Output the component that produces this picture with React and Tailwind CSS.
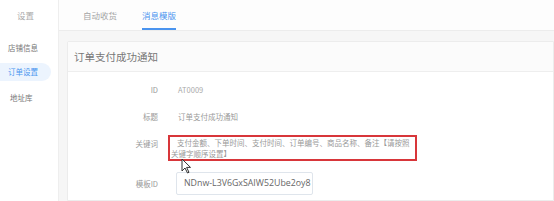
import React from "react";

const font = { fontFamily: '"Noto Sans CJK SC", "Noto Sans", sans-serif' };

export default function App() {
  return (
    <div
      className="relative flex w-[554px] h-[201px] overflow-hidden bg-white text-[#888]"
      style={font}
    >
      {/* Sidebar */}
      <div className="w-[59px] shrink-0 border-r border-[#eeeeee] bg-white flex flex-col">
        <div className="h-[31px] flex items-center pl-[17px] text-[8.5px] text-[#aaa]">设置</div>
        <div className="mt-[8px] h-[18px] flex items-center pl-[8px] text-[7.5px] text-[#777]">店铺信息</div>
        <div className="mt-[6px] h-[18px] w-[51px] flex items-center pl-[8px] text-[7.5px] text-[#4a94ef] bg-[#ecf4fe] rounded-r-full">
          订单设置
        </div>
        <div className="mt-[8px] h-[18px] flex items-center pl-[10px] text-[7.5px] text-[#777]">地址库</div>
      </div>

      {/* Main */}
      <div className="flex-1 flex flex-col min-w-0">
        <div className="h-[31px] shrink-0 bg-[#fdfdfd] border-b border-[#ececec] flex items-stretch pl-[24px] gap-[25px] text-[8.5px]">
          <div className="flex items-center text-[#a5a5a5]">自动收货</div>
          <div className="relative flex items-center text-[#4a94ef]">
            消息模版
            <div className="absolute left-0 right-0 bottom-[0px] h-[2px] bg-[#4a94ef]" />
          </div>
        </div>
        <div className="flex-1 bg-[#f6f6f6] pl-[8px] pt-[10px]">
          <div className="h-full bg-white border border-[#ececec] rounded-tl-[2px]">
            <div className="h-[30px] bg-[#fbfbfb] border-b border-[#eeeeee] flex items-center pl-[6px] text-[10.5px] text-[#777]">
              订单支付成功通知
            </div>
            <div className="pt-[9px] text-[7.5px]">
              <div className="flex h-[18px] items-center">
                <div className="w-[90px] text-right text-[#999]">ID</div>
                <div className="pl-[20px] text-[#aaa]">AT0009</div>
              </div>
              <div className="flex h-[18px] items-center mt-[9px]">
                <div className="w-[90px] text-right text-[#999]">标题</div>
                <div className="pl-[20px] text-[#999]">订单支付成功通知</div>
              </div>
              <div className="flex mt-[9px]">
                <div className="w-[90px] text-right text-[#999] leading-[11px] pt-[3px]">关键词</div>
                <div className="ml-[10px] w-[249px] h-[26px] border-2 border-[#d8363a] leading-[11px] text-[#999]">
                  <div className="pl-[7px] whitespace-nowrap">支付金额、下单时间、支付时间、订单编号、商品名称、备注【请按照</div>
                  <div className="pl-[1px] whitespace-nowrap">关键字顺序设置】</div>
                </div>
              </div>
              <div className="flex items-center mt-[11px]">
                <div className="w-[90px] text-right text-[#999]">模板ID</div>
                <div className="ml-[18px] w-[137px] h-[23px] border border-[#dfe5ec] rounded-[2px] overflow-hidden flex items-center pl-[7px] bg-white">
                  <span
                    className="whitespace-nowrap text-[8.8px] text-[#666]"
                    style={{ fontFamily: '"Open Sans", "Liberation Sans", sans-serif' }}
                  >
                    NDnw-L3V6GxSAIW52Ube2oy8
                  </span>
                </div>
              </div>
            </div>
          </div>
        </div>
      </div>

      {/* Mouse cursor */}
      <svg
        className="absolute left-[181px] top-[158px]"
        width="11"
        height="16"
        viewBox="0 0 11 16"
      >
        <path
          d="M1 1 L1 13 L4 10 L6.5 15 L8 14.3 L5.6 9.4 L9.5 9.4 Z"
          fill="#fff"
          stroke="#333"
          strokeWidth="1"
          strokeLinejoin="round"
        />
      </svg>
    </div>
  );
}
